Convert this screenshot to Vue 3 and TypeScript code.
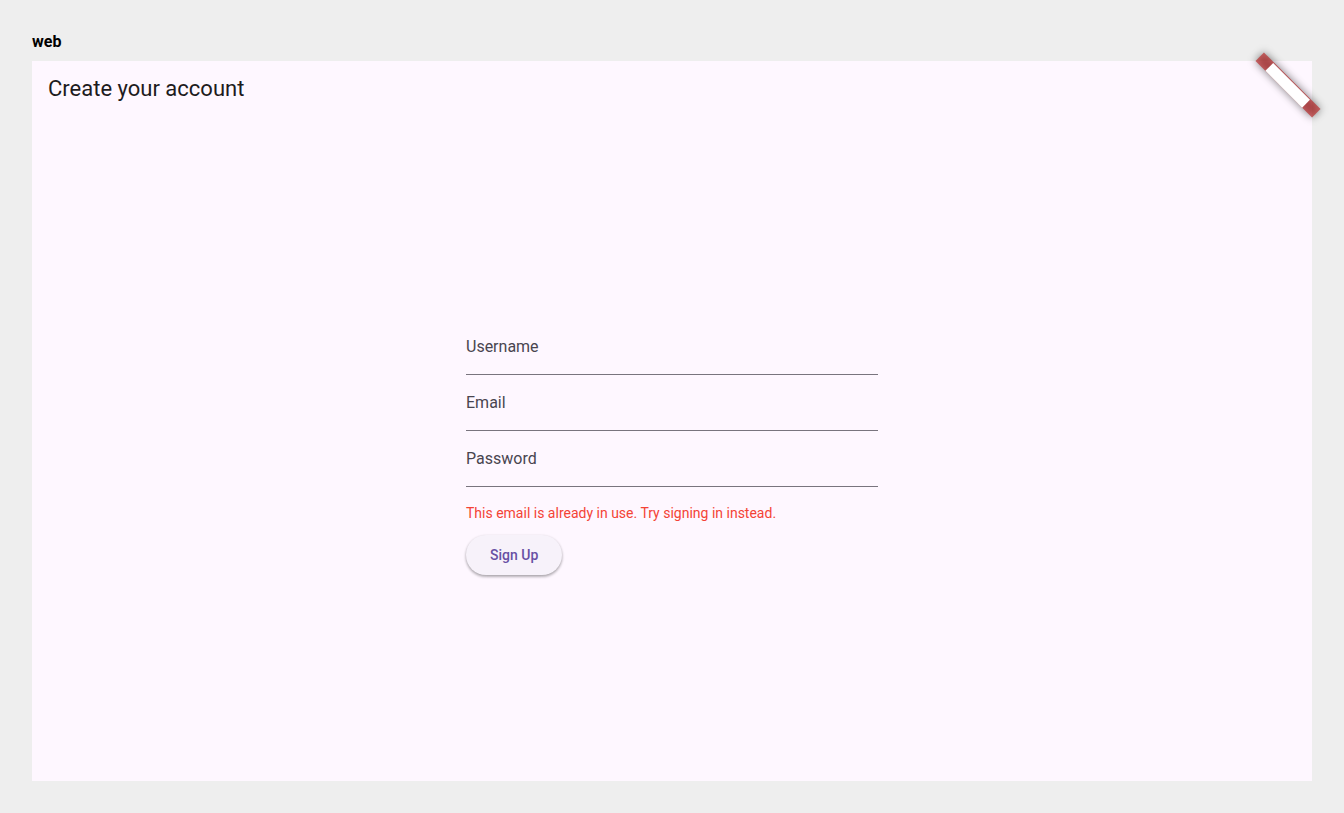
<script setup lang="ts">
import { reactive, ref } from 'vue'

type FieldKey = 'username' | 'email' | 'password'

interface Field {
  key: FieldKey
  label: string
  type: string
  autocomplete: string
}

const fields: Field[] = [
  { key: 'username', label: 'Username', type: 'text', autocomplete: 'username' },
  { key: 'email', label: 'Email', type: 'email', autocomplete: 'email' },
  { key: 'password', label: 'Password', type: 'password', autocomplete: 'new-password' },
]

const values = reactive<Record<FieldKey, string>>({ username: '', email: '', password: '' })
const error = ref('This email is already in use. Try signing in instead.')
</script>

<template>
  <div class="page">
    <h2 class="device">web</h2>
    <section class="frame">
      <header class="bar">
        <h1 class="title">Create your account</h1>
      </header>
      <main class="body">
        <form class="form" novalidate @submit.prevent>
          <div v-for="f in fields" :key="f.key" class="field">
            <label class="label" :class="{ raised: values[f.key] }" :for="f.key">{{ f.label }}</label>
            <input
              :id="f.key"
              v-model="values[f.key]"
              class="input"
              :type="f.type"
              :autocomplete="f.autocomplete"
            />
          </div>
          <p v-if="error" class="error" role="alert">{{ error }}</p>
          <button class="submit" type="submit">Sign Up</button>
        </form>
      </main>
      <svg class="ribbon" viewBox="0 0 96 96" aria-hidden="true">
        <defs>
          <filter id="ribbon-shadow" x="-50%" y="-200%" width="200%" height="500%">
            <feGaussianBlur stdDeviation="4" />
          </filter>
        </defs>
        <g transform="rotate(45 48 48)">
          <rect x="8" y="42" width="80" height="12" fill="#000" fill-opacity="0.5" filter="url(#ribbon-shadow)" />
          <rect x="8" y="42" width="80" height="12" fill="#b71c1c" fill-opacity="0.63" />
          <rect x="22" y="43" width="52" height="11" fill="#fff" />
        </g>
      </svg>
    </section>
  </div>
</template>

<style>
body {
  background: #eeeeee;
}
</style>

<style scoped>
.page {
  box-sizing: border-box;
  min-height: 100vh;
  padding: 32px;
  display: flex;
  flex-direction: column;
  gap: 10px;
  background: #eeeeee;
  font-family: Roboto, "Liberation Sans", sans-serif;
}

.device {
  margin: 0;
  font-size: 16px;
  line-height: 19px;
  font-weight: 700;
  color: #000;
}

.frame {
  position: relative;
  flex: 1;
  display: flex;
  flex-direction: column;
  background: #fef7ff;
}

.bar {
  display: flex;
  align-items: center;
  height: 56px;
  padding: 0 16px;
}

.title {
  margin: 0;
  font-size: 22px;
  line-height: 28px;
  font-weight: 400;
  color: #1d1b20;
}

.body {
  flex: 1;
  display: flex;
  align-items: center;
  justify-content: center;
}

.form {
  width: 412px;
  max-width: 100%;
}

.field {
  display: grid;
  height: 56px;
}

.label,
.input {
  grid-area: 1 / 1;
  font-size: 16px;
  line-height: 24px;
}

.label {
  align-self: center;
  color: #49454f;
  pointer-events: none;
}

.label.raised,
.field:focus-within .label {
  align-self: start;
  font-size: 12px;
}

.input {
  box-sizing: border-box;
  width: 100%;
  margin: 0;
  padding: 16px 0 0;
  border: 0;
  border-bottom: 1px solid #79747e;
  border-radius: 0;
  outline: none;
  background: transparent;
  color: #1d1b20;
  font-family: inherit;
}

.input:focus {
  border-bottom: 2px solid #6750a4;
}

.error {
  margin: 0;
  padding: 16px 0 8px;
  font-size: 14px;
  line-height: 20px;
  color: #f44336;
}

.submit {
  display: block;
  height: 40px;
  margin: 4px 0;
  padding: 0 24px;
  border: 0;
  border-radius: 20px;
  background: #f7f2fa;
  box-shadow: 0 1px 3px rgba(0, 0, 0, 0.2), 0 2px 3px rgba(0, 0, 0, 0.2);
  color: #6750a4;
  font-family: inherit;
  font-size: 14px;
  line-height: 20px;
  font-weight: 500;
  cursor: pointer;
}

.ribbon {
  position: absolute;
  top: -24px;
  right: -24px;
  width: 96px;
  height: 96px;
  pointer-events: none;
}
</style>
